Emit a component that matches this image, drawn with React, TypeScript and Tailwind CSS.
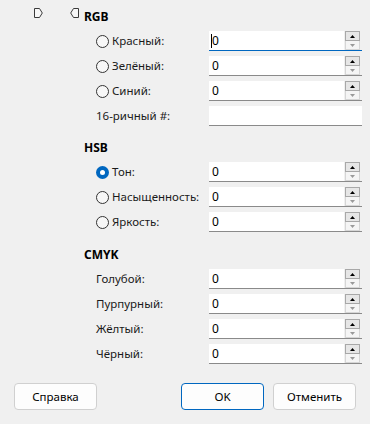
import React from 'react'

const font = "font-['Noto_Sans',sans-serif]"

function Radio({ checked }: { checked?: boolean }) {
  if (checked) {
    return (
      <span className="flex h-[13px] w-[13px] shrink-0 items-center justify-center rounded-full bg-[#0067c0]">
        <span className="h-[5px] w-[5px] rounded-full bg-white" />
      </span>
    )
  }
  return <span className="h-[13px] w-[13px] shrink-0 rounded-full border border-[#333] bg-[#f7f7f7]" />
}

function Spin() {
  return (
    <div className="flex h-[19px] w-[15px] flex-col">
      <div className="flex h-[10px] items-center justify-center border border-[#a8a8a8] bg-[#e6e6e6]">
        <svg width="5" height="3" viewBox="0 0 5 3">
          <path d="M0 3 L2.5 0 L5 3 Z" fill="#000" />
        </svg>
      </div>
      <div className="flex h-[9px] items-center justify-center border border-t-0 border-[#d6d6d6] bg-[#f5f5f5]">
        <svg width="5" height="3" viewBox="0 0 5 3">
          <path d="M0 0 L2.5 3 L5 0 Z" fill="#9a9a9a" />
        </svg>
      </div>
    </div>
  )
}

function Field({ value = '0', spin = true, focused }: { value?: string; spin?: boolean; focused?: boolean }) {
  return (
    <div className={`flex h-[20px] w-[153px] border-b ${focused ? 'border-[#0067c0]' : 'border-[#8a8a8a]'} ${spin ? '' : 'bg-white'}`}>
      <div className="relative flex w-[135px] items-center bg-white pl-[3px] text-[12px] text-black">
        {focused && <span className="absolute left-[2px] top-[3px] h-[14px] w-px bg-black" />}
        {value}
      </div>
      {spin && (
        <div className="flex flex-1 items-start pl-[1px]">
          <Spin />
        </div>
      )}
    </div>
  )
}

function Row({ label, radio, checked, spin = true, focused, value }: { label: string; radio?: boolean; checked?: boolean; spin?: boolean; focused?: boolean; value?: string }) {
  return (
    <div className="flex h-[20px] items-center">
      <div className="flex w-[125px] items-center gap-[3px] pl-[12px] text-[11.5px] text-[#1a1a1a]">
        {radio && <Radio checked={checked} />}
        <span className="whitespace-nowrap">{label}</span>
      </div>
      <Field spin={spin} focused={focused} value={value} />
    </div>
  )
}

function Section({ title, children }: { title: string; children: React.ReactNode }) {
  return (
    <div className="flex flex-col">
      <div className="h-[16px] text-[12px] font-bold leading-[16px] text-black">{title}</div>
      <div className="mt-[6px] flex flex-col gap-[5px]">{children}</div>
    </div>
  )
}

function Marker({ flip }: { flip?: boolean }) {
  return (
    <svg width="9" height="10" viewBox="0 0 9 10">
      <path
        d={flip ? 'M8.5 0.5 H3.5 L0.7 5 L3.5 9.5 H8.5 Z' : 'M0.5 0.5 H5.5 L8.3 5 L5.5 9.5 H0.5 Z'}
        fill="#f7f7f7"
        stroke="#3a3a3a"
        strokeWidth="1"
      />
    </svg>
  )
}

function Btn({ children, primary }: { children: React.ReactNode; primary?: boolean }) {
  return (
    <button className={`flex h-[27px] w-[83px] items-center justify-center rounded-[4px] border bg-[#fdfdfd] text-[11.5px] text-black ${primary ? 'border-[#0067c0]' : 'border-[#d0d0d0]'}`}>
      {children}
    </button>
  )
}

export default function App() {
  return (
    <div className={`flex h-[424px] w-[370px] flex-col bg-[#f0f0f0] ${font}`}>
      <div className="flex">
        <div className="flex w-[84px] items-start pt-[8px]">
          <div className="ml-[34px]"><Marker /></div>
          <div className="ml-[27px]"><Marker flip /></div>
        </div>
        <div className="flex flex-col pt-[9px]">
          <Section title="RGB">
            <Row label="Красный:" radio focused />
            <Row label="Зелёный:" radio />
            <Row label="Синий:" radio />
            <Row label="16-ричный #:" spin={false} value="" />
          </Section>
          <div className="mt-[14px]">
            <Section title="HSB">
              <Row label="Тон:" radio checked />
              <Row label="Насыщенность:" radio />
              <Row label="Яркость:" radio />
            </Section>
          </div>
          <div className="mt-[15px]">
            <Section title="CMYK">
              <Row label="Голубой:" />
              <Row label="Пурпурный:" />
              <Row label="Жёлтый:" />
              <Row label="Чёрный:" />
            </Section>
          </div>
        </div>
      </div>
      <div className="mt-[19px] flex px-[14px]">
        <Btn>Справка</Btn>
        <div className="ml-auto flex gap-[9px]">
          <Btn primary>OK</Btn>
          <Btn>Отменить</Btn>
        </div>
      </div>
    </div>
  )
}
